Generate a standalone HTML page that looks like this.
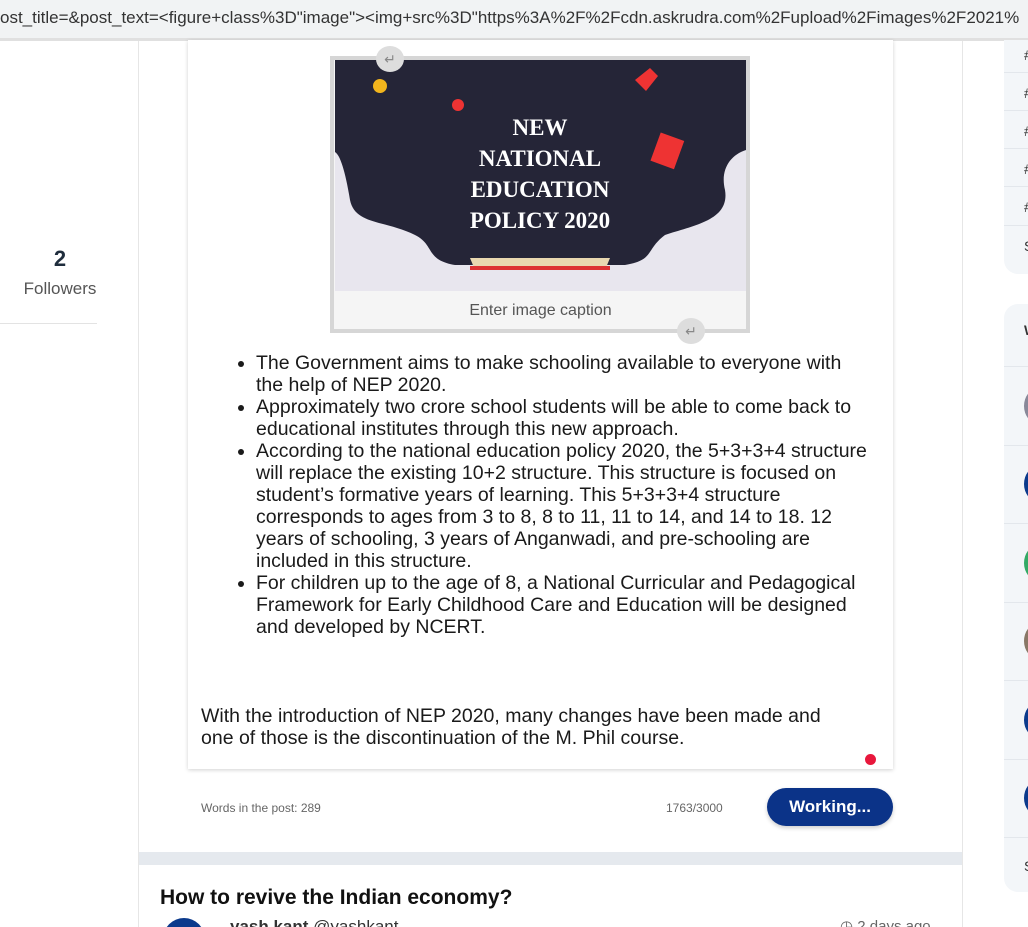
<!DOCTYPE html>
<html><head><style>
*{margin:0;padding:0;box-sizing:border-box}
html,body{width:1028px;height:927px;overflow:hidden}
body{background:#fff;font-family:"Liberation Sans",sans-serif;position:relative;color:#222}
.abs{position:absolute}
.url{left:0;top:0;width:1028px;height:38px;background:#f1f3f4;font-size:17px;color:#333;line-height:36px;white-space:nowrap;overflow:hidden}
.hl{left:0;top:38px;width:1028px;height:3px;background:#e0e0e0}
ul{position:absolute;left:256px;top:352px;width:612px;font-size:19.5px;line-height:22px;color:#1a1a1a}
.side{left:1004px;width:30px;background:#f3f6f9;border-radius:14px 0 0 14px}
.row{position:absolute;left:0;width:30px;border-top:1px solid #e3e7ec}
.av{position:absolute;left:20px;width:30px;height:36px;border-radius:50%;background:#0b3a8c}
.ch{position:absolute;left:20px;font-size:14px;color:#333}
</style></head><body>
<div class="abs url">ost_title=&amp;post_text=&lt;figure+class%3D"image"&gt;&lt;img+src%3D"https%3A%2F%2Fcdn.askrudra.com%2Fupload%2Fimages%2F2021%</div>
<div class="abs hl"></div>
<div class="abs" style="left:138px;top:41px;width:1px;height:886px;background:#e6e6e6"></div>
<div class="abs" style="left:962px;top:41px;width:1px;height:886px;background:#e6e6e6"></div>
<div class="abs" style="left:0;top:246px;width:120px;text-align:center;font-size:22px;font-weight:bold;color:#1f2d3d">2</div>
<div class="abs" style="left:0;top:279px;width:120px;text-align:center;font-size:17px;color:#555">Followers</div>
<div class="abs" style="left:0;top:323px;width:97px;height:1px;background:#e3e3e3"></div>

<div class="abs" style="left:188px;top:40px;width:705px;height:729px;background:#fff;box-shadow:0 1px 4px rgba(0,0,0,.18)"></div>
<div class="abs" style="left:330px;top:56px;width:420px;height:277px;border:4px solid #d6d6d6;background:#f5f5f5"></div>
<div class="abs" style="left:335px;top:60px;width:411px;height:231px;background:#e8e6ee;overflow:hidden">
<svg width="411" height="231"><path d="M0 0H411V90C395 95 385 110 390 130C395 160 360 165 330 175C310 190 320 200 290 205H120C90 200 100 185 80 175C50 160 20 165 15 140C10 110 5 95 0 92Z" fill="#252537"/>
<circle cx="123" cy="45" r="6" fill="#e33"/><circle cx="45" cy="26" r="7" fill="#f2b51d"/><path d="M300 20l15-12 8 8-12 15z" fill="#e33"/><rect x="320" y="75" width="25" height="30" fill="#e33" transform="rotate(20 330 90)"/>
<path d="M135 198h140l-5 12H140z" fill="#e9d8b0"/><rect x="135" y="206" width="140" height="4" fill="#d33"/>
<text x="205" y="75" font-family="Liberation Serif" font-weight="bold" font-size="23" fill="#fff" text-anchor="middle">NEW</text>
<text x="205" y="106" font-family="Liberation Serif" font-weight="bold" font-size="23" fill="#fff" text-anchor="middle">NATIONAL</text>
<text x="205" y="137" font-family="Liberation Serif" font-weight="bold" font-size="23" fill="#fff" text-anchor="middle">EDUCATION</text>
<text x="205" y="168" font-family="Liberation Serif" font-weight="bold" font-size="23" fill="#fff" text-anchor="middle">POLICY 2020</text></svg></div>
<div class="abs" style="left:335px;top:302px;width:411px;text-align:center;font-size:16px;color:#555">Enter image caption</div>
<div class="abs" style="left:376px;top:46px;width:28px;height:26px;border-radius:50%;background:#ddd;color:#888;text-align:center;line-height:26px;font-size:14px">↵</div>
<div class="abs" style="left:677px;top:318px;width:28px;height:26px;border-radius:50%;background:#ddd;color:#888;text-align:center;line-height:26px;font-size:14px">↵</div>
<ul>
<li>The Government aims to make schooling available to everyone with the help of NEP 2020.</li>
<li>Approximately two crore school students will be able to come back to educational institutes through this new approach.</li>
<li>According to the national education policy 2020, the 5+3+3+4 structure will replace the existing 10+2 structure. This structure is focused on student’s formative years of learning. This 5+3+3+4 structure corresponds to ages from 3 to 8, 8 to 11, 11 to 14, and 14 to 18. 12 years of schooling, 3 years of Anganwadi, and pre-schooling are included in this structure.</li>
<li>For children up to the age of 8, a National Curricular and Pedagogical Framework for Early Childhood Care and Education will be designed and developed by NCERT.</li>
</ul>
<div class="abs" style="left:201px;top:705px;width:655px;font-size:19.5px;line-height:22px;color:#1a1a1a">With the introduction of NEP 2020, many changes have been made and one of those is the discontinuation of the M. Phil course.</div>
<div class="abs" style="left:865px;top:754px;width:11px;height:11px;border-radius:50%;background:#e8173c"></div>
<div class="abs" style="left:201px;top:801px;font-size:12px;color:#666">Words in the post: 289</div>
<div class="abs" style="left:666px;top:801px;font-size:12px;color:#666">1763/3000</div>
<div class="abs" style="left:767px;top:788px;width:126px;height:38px;border-radius:19px;background:#0b3388;color:#fff;font-weight:bold;font-size:17px;text-align:center;line-height:38px;box-shadow:0 2px 4px rgba(0,0,0,.2)">Working...</div>
<div class="abs" style="left:139px;top:852px;width:823px;height:13px;background:#e5e9ee"></div>
<div class="abs" style="left:160px;top:886px;font-size:21px;font-weight:bold;color:#111">How to revive the Indian economy?</div>
<div class="abs" style="left:163px;top:918px;width:42px;height:42px;border-radius:50%;background:#0b3a8c"></div>
<div class="abs" style="left:230px;top:917px;font-size:17px;color:#333"><b>yash kant</b> @yashkant</div>
<div class="abs" style="left:840px;top:917px;font-size:15px;color:#666">◷ 2 days ago</div>

<div class="abs side" style="top:40px;height:234px;border-radius:0 0 0 14px"></div>
<div class="abs side" style="top:304px;height:588px"></div>
<div class="abs" style="left:1004px;top:0;width:24px;height:927px;overflow:hidden">
<div class="row" style="top:72px"></div><div class="row" style="top:110px"></div><div class="row" style="top:148px"></div><div class="row" style="top:186px"></div><div class="row" style="top:225px"></div>
<div class="ch" style="top:47px">#</div><div class="ch" style="top:85px">#</div><div class="ch" style="top:123px">#</div><div class="ch" style="top:161px">#</div><div class="ch" style="top:199px">#</div><div class="ch" style="top:238px">S</div>
<div class="ch" style="top:322px;font-weight:bold">W</div>
<div class="row" style="top:366px"></div><div class="row" style="top:445px"></div><div class="row" style="top:523px"></div><div class="row" style="top:602px"></div><div class="row" style="top:680px"></div><div class="row" style="top:759px"></div><div class="row" style="top:837px"></div>
<div class="ch" style="top:858px">S</div>
<div class="av" style="top:388px;background:#889"></div><div class="av" style="top:466px"></div><div class="av" style="top:545px;background:#3a6"></div><div class="av" style="top:623px;background:#876"></div><div class="av" style="top:702px"></div><div class="av" style="top:780px"></div>
</div>
</body></html>
